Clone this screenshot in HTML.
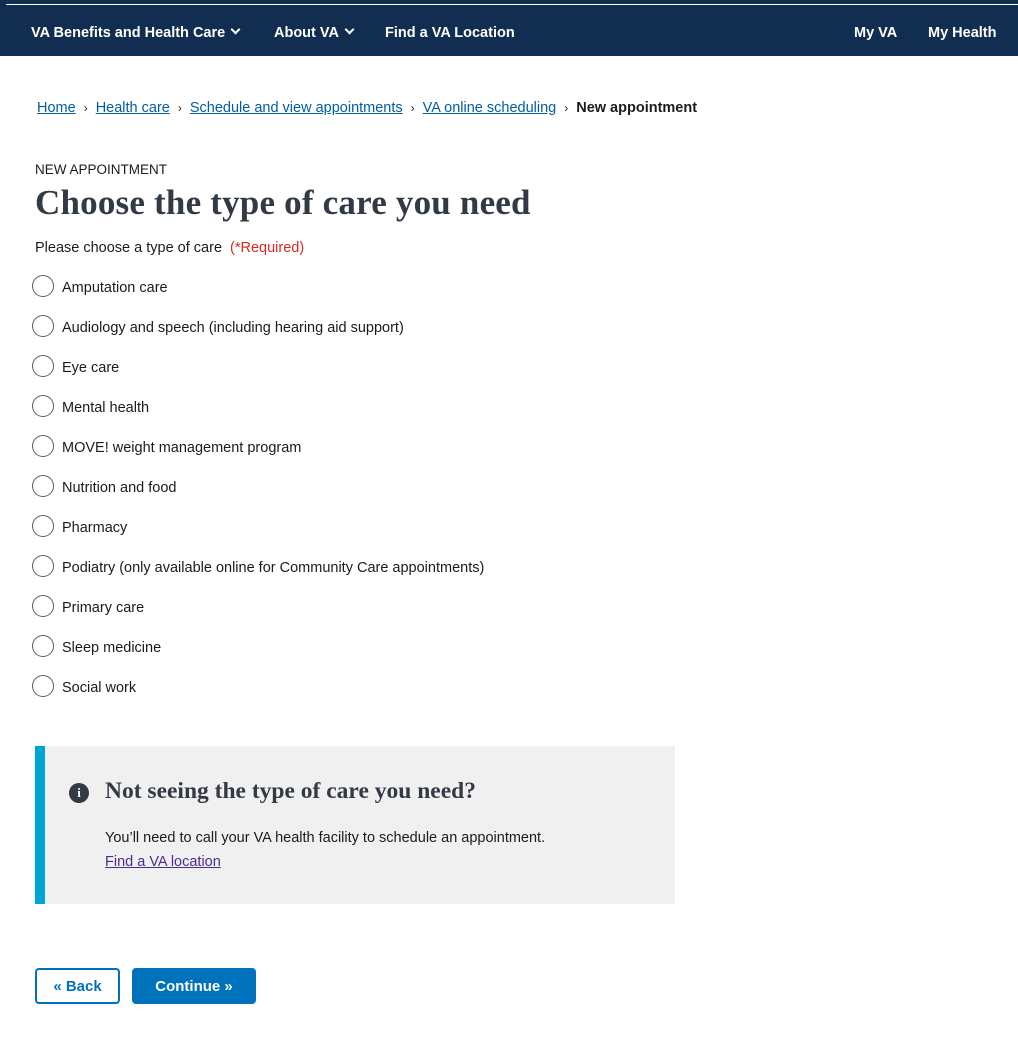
<!DOCTYPE html>
<html><head><meta charset="utf-8"><style>
*{box-sizing:border-box;margin:0;padding:0}
body{width:1018px;height:1052px;background:#fff;font-family:"Liberation Sans",sans-serif;color:#1b1b1b;position:relative;overflow:hidden}
.hdr{position:absolute;left:0;top:0;width:1018px;height:56px;background:#112e51}
.hdr .line{position:absolute;left:6px;right:0;top:4px;height:1px;background:#fff}
.hdr span{position:absolute;top:25px;color:#fff;font-weight:bold;font-size:14.5px}
.chev{display:inline-block;width:7px;height:7px;border-right:2px solid #fff;border-bottom:2px solid #fff;transform:rotate(45deg);margin-left:7px;position:relative;top:-4px}
.bc{position:absolute;left:37px;top:100px;font-size:14.5px;color:#1b1b1b}
.bc a{color:#005ea2;text-decoration:underline}
.bc i{font-style:normal;margin:0 8px;font-size:12px}
.kick{position:absolute;left:35px;top:162px;font-size:13.5px;color:#1b1b1b}
h1{position:absolute;left:35px;top:183px;font-family:"Liberation Serif",serif;font-weight:bold;font-size:35px;color:#323a45;letter-spacing:0.2px}
.lbl{position:absolute;left:35px;top:240px;font-size:14.5px}
.lbl b{color:#d72a22;font-weight:normal;margin-left:4px}
.r{position:absolute;left:32px;font-size:14.5px;color:#1b1b1b}
.r:before{content:"";position:absolute;left:0;top:-3px;width:20px;height:20px;border:1.5px solid #565c65;border-radius:50%}
.r span{position:absolute;left:30px;top:2px;white-space:nowrap}
.box{position:absolute;left:35px;top:746px;width:640px;height:158px;background:#f0f0f0;border-left:10px solid #00a6d2}
.box .ic{position:absolute;left:24px;top:37px;width:20px;height:20px;border-radius:50%;background:#323a45;color:#fff;font:bold 13px "Liberation Serif",serif;text-align:center;line-height:20px}
.box h2{position:absolute;left:60px;top:32px;font-family:"Liberation Serif",serif;font-weight:bold;font-size:23.5px;color:#323a45}
.box p{position:absolute;left:60px;top:84px;font-size:14.5px}
.box a{position:absolute;left:60px;top:108px;font-size:14.5px;color:#4c2c92;text-decoration:underline}
.btn{position:absolute;top:968px;height:36px;border-radius:4px;font-weight:bold;font-size:15px;text-align:center;line-height:38px}
</style></head><body>
<div class="hdr"><div class="line"></div>
<span style="left:31px">VA Benefits and Health Care<i class="chev"></i></span>
<span style="left:274px">About VA<i class="chev"></i></span>
<span style="left:385px">Find a VA Location</span>
<span style="left:854px">My VA</span>
<span style="left:928px">My Health</span>
</div>
<div class="bc"><a>Home</a><i>›</i><a>Health care</a><i>›</i><a>Schedule and view appointments</a><i>›</i><a>VA online scheduling</a><i>›</i><b>New appointment</b></div>
<div class="kick">NEW APPOINTMENT</div>
<h1>Choose the type of care you need</h1>
<div class="lbl">Please choose a type of care <b>(*Required)</b></div>
<div class="r" style="top:278px"><span>Amputation care</span></div>
<div class="r" style="top:318px"><span>Audiology and speech (including hearing aid support)</span></div>
<div class="r" style="top:358px"><span>Eye care</span></div>
<div class="r" style="top:398px"><span>Mental health</span></div>
<div class="r" style="top:438px"><span>MOVE! weight management program</span></div>
<div class="r" style="top:478px"><span>Nutrition and food</span></div>
<div class="r" style="top:518px"><span>Pharmacy</span></div>
<div class="r" style="top:558px"><span>Podiatry (only available online for Community Care appointments)</span></div>
<div class="r" style="top:598px"><span>Primary care</span></div>
<div class="r" style="top:638px"><span>Sleep medicine</span></div>
<div class="r" style="top:678px"><span>Social work</span></div>
<div class="box"><div class="ic">i</div><h2>Not seeing the type of care you need?</h2>
<p>You’ll need to call your VA health facility to schedule an appointment.</p>
<a>Find a VA location</a></div>
<div class="btn" style="left:35px;width:85px;border:2px solid #0071bb;color:#0071bb;line-height:34px">« Back</div>
<div class="btn" style="left:132px;width:124px;background:#0071bb;color:#fff">Continue »</div>
</body></html>
